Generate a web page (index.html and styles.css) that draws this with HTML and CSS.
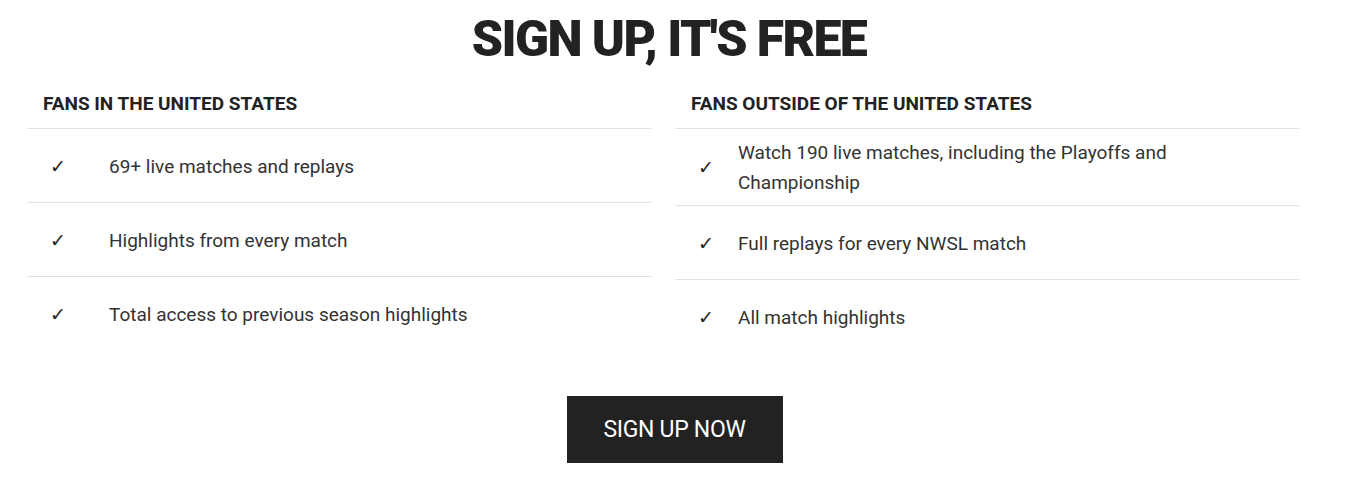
FILE: index.html
```html
<!DOCTYPE html>
<html lang="en">
<head>
    <meta charset="UTF-8">
    <meta name="viewport" content="width=device-width, initial-scale=1.0">
    <title>Sign Up</title>
    <link rel="stylesheet" href="styles.css">
</head>
<body>
    <section class="signup">
        <h1 class="signup-title">SIGN UP, IT'S FREE</h1>

        <div class="plans">
            <!-- US fans -->
            <div class="plan plan-us">
                <h2 class="plan-title">FANS IN THE UNITED STATES</h2>
                <div class="row">
                    <span class="check">&#10003;</span>
                    <span class="row-text">69+ live matches and replays</span>
                </div>
                <div class="row">
                    <span class="check">&#10003;</span>
                    <span class="row-text">Highlights from every match</span>
                </div>
                <div class="row">
                    <span class="check">&#10003;</span>
                    <span class="row-text">Total access to previous season highlights</span>
                </div>
            </div>

            <!-- international fans -->
            <div class="plan plan-intl">
                <h2 class="plan-title">FANS OUTSIDE OF THE UNITED STATES</h2>
                <div class="row">
                    <span class="check">&#10003;</span>
                    <span class="row-text">Watch 190 live matches, including the Playoffs and Championship</span>
                </div>
                <div class="row">
                    <span class="check">&#10003;</span>
                    <span class="row-text">Full replays for every NWSL match</span>
                </div>
                <div class="row">
                    <span class="check">&#10003;</span>
                    <span class="row-text">All match highlights</span>
                </div>
            </div>
        </div>

        <div class="cta">
            <a href="#" class="cta-button">SIGN UP NOW</a>
        </div>
    </section>
</body>
</html>
```

FILE: styles.css
```css
* {
    margin: 0;
    padding: 0;
    box-sizing: border-box;
}

body {
    font-family: Roboto, "Liberation Sans", sans-serif;
    background-color: #fff;
    color: #222;
}

.signup {
    padding: 14px 66px 0 27px;
}

/* big title */
.signup-title {
    text-align: center;
    font-family: Roboto, sans-serif;
    font-weight: 900;
    font-size: 50px;
    line-height: 50px;
    letter-spacing: -1.6px;
    color: #222;
    padding-left: 12px;
}

.plans {
    display: flex;
    gap: 24px;
    margin-top: 28px;
}

.plan {
    flex: 1;
}

.plan-title {
    font-size: 19px;
    font-weight: 700;
    line-height: 24px;
    padding: 0 16px 12px;
    border-bottom: 1px solid #e2e2e2;
    color: #222;
}

.row {
    display: flex;
    align-items: center;
    min-height: 74px;
    padding: 9px 0 7px 23px;
    border-bottom: 1px solid #e2e2e2;
    font-size: 19px;
    line-height: 30px;
    color: #333;
}

.row:last-child {
    border-bottom: none;
}

.check {
    flex-shrink: 0;
    font-size: 19px;
    color: #222;
}

.plan-us .check {
    width: 59px;
}

.plan-intl .check {
    width: 40px;
}

.row-text {
    padding-right: 100px;
}

/* button */
.cta {
    display: flex;
    justify-content: center;
    margin-top: 42px;
    padding-left: 23px;
}

.cta-button {
    display: flex;
    align-items: center;
    justify-content: center;
    width: 216px;
    height: 67px;
    background-color: #222;
    color: #fff;
    text-decoration: none;
    font-size: 23px;
    letter-spacing: -0.3px;
}
```
